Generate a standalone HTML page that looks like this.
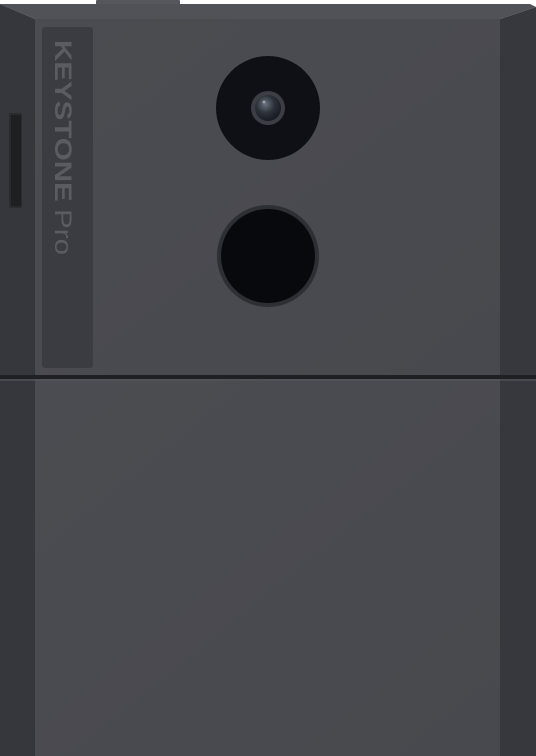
<!DOCTYPE html>
<html><head><style>
html,body{margin:0;padding:0;background:#fff;width:536px;height:756px;overflow:hidden}
</style></head><body>
<svg width="536" height="756" viewBox="0 0 536 756" xmlns="http://www.w3.org/2000/svg" style="display:block">
<defs>
<linearGradient id="face" x1="0" y1="0" x2="1" y2="1">
<stop offset="0" stop-color="#4b4c51"/><stop offset="1" stop-color="#48494e"/>
</linearGradient>
<radialGradient id="lens" cx="0.4" cy="0.35" r="0.7">
<stop offset="0" stop-color="#6b7280"/><stop offset="0.5" stop-color="#2c3038"/><stop offset="1" stop-color="#15181d"/>
</radialGradient>
</defs>
<rect x="96" y="0" width="84" height="5" rx="1" fill="#55575c"/>
<polygon points="0,4 530,4 536,7 500,19 35,19" fill="#515257"/>
<polygon points="0,4 35,19 35,756 0,756" fill="#36373c"/>
<polygon points="536,7 536,756 500,756 500,19" fill="#37383d"/>
<rect x="35" y="19" width="465" height="357" fill="url(#face)"/>
<rect x="35" y="379" width="465" height="377" fill="url(#face)"/>
<rect x="0" y="375" width="536" height="4" fill="#1f2023"/>
<rect x="0" y="379" width="536" height="2" fill="#55565b" opacity="0.6"/>
<rect x="9" y="113" width="13" height="95" rx="2" fill="#2a2b2f"/>
<rect x="11" y="115" width="10" height="91" rx="1" fill="#1e1f22"/>
<rect x="42" y="27" width="51" height="341" rx="3" fill="#3b3c41"/>
<text transform="translate(55,40) rotate(90)" font-family="Liberation Sans, sans-serif" font-size="24" fill="#5b5c62" textLength="215" lengthAdjust="spacingAndGlyphs"><tspan font-weight="bold">KEYSTONE</tspan><tspan dx="6">Pro</tspan></text>
<circle cx="268" cy="108" r="52" fill="#0e1015"/>
<circle cx="268" cy="108" r="17" fill="#3b3e45"/>
<circle cx="268" cy="108" r="13" fill="url(#lens)"/>
<circle cx="264" cy="102" r="1.5" fill="#9aa0aa"/>
<circle cx="268" cy="256" r="51" fill="#2d2f34"/>
<circle cx="268" cy="256" r="47" fill="#08090c"/>
</svg>
</body></html>
